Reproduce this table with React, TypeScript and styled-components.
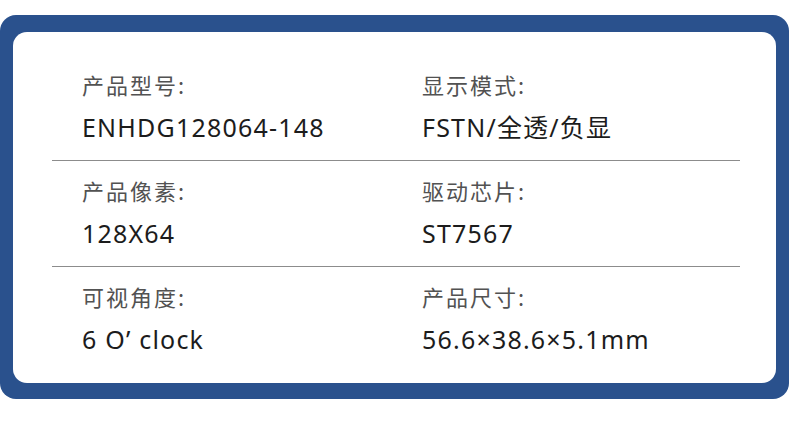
import React from "react";
import styled, { createGlobalStyle } from "styled-components";

const GlobalStyle = createGlobalStyle`
  html, body {
    margin: 0;
    padding: 0;
    background: #ffffff;
  }
  body {
    font-family: "Noto Sans", "Noto Sans CJK SC", sans-serif;
  }
`;

const Frame = styled.div`
  margin-top: 15px;
  width: 789px;
  height: 384px;
  box-sizing: border-box;
  padding: 17px 13px 16px 13px;
  background: #2a518d;
  border-radius: 16px;
`;

const Card = styled.div`
  height: 100%;
  box-sizing: border-box;
  padding-top: 23px;
  background: #ffffff;
  border-radius: 14px;
`;

const Row = styled.div`
  display: grid;
  grid-template-columns: 340px 1fr;
  padding: 14px 0 18px 69px;
`;

const Divider = styled.div`
  height: 1px;
  margin: 0 36px 0 39px;
  background: #8c8c8c;
`;

const Field = styled.div`
  display: flex;
  flex-direction: column;
  gap: 13px;
`;

const Label = styled.div`
  font-family: "Noto Sans CJK SC", "Noto Sans", sans-serif;
  font-size: 22px;
  line-height: 30px;
  letter-spacing: 2px;
  color: #525252;
`;

const Value = styled.div`
  font-family: "Noto Sans", "Noto Sans CJK SC", sans-serif;
  font-size: 25px;
  line-height: 30px;
  letter-spacing: 1.2px;
  color: #1c1c1c;
`;

type Item = { label: string; value: string };

const rows: Item[][] = [
  [
    { label: "产品型号:", value: "ENHDG128064-148" },
    { label: "显示模式:", value: "FSTN/全透/负显" },
  ],
  [
    { label: "产品像素:", value: "128X64" },
    { label: "驱动芯片:", value: "ST7567" },
  ],
  [
    { label: "可视角度:", value: "6 O’ clock" },
    { label: "产品尺寸:", value: "56.6×38.6×5.1mm" },
  ],
];

export default function App() {
  return (
    <>
      <GlobalStyle />
      <Frame>
        <Card>
          {rows.map((row, i) => (
            <React.Fragment key={i}>
              {i > 0 && <Divider />}
              <Row>
                {row.map((item) => (
                  <Field key={item.label}>
                    <Label>{item.label}</Label>
                    <Value>{item.value}</Value>
                  </Field>
                ))}
              </Row>
            </React.Fragment>
          ))}
        </Card>
      </Frame>
    </>
  );
}
